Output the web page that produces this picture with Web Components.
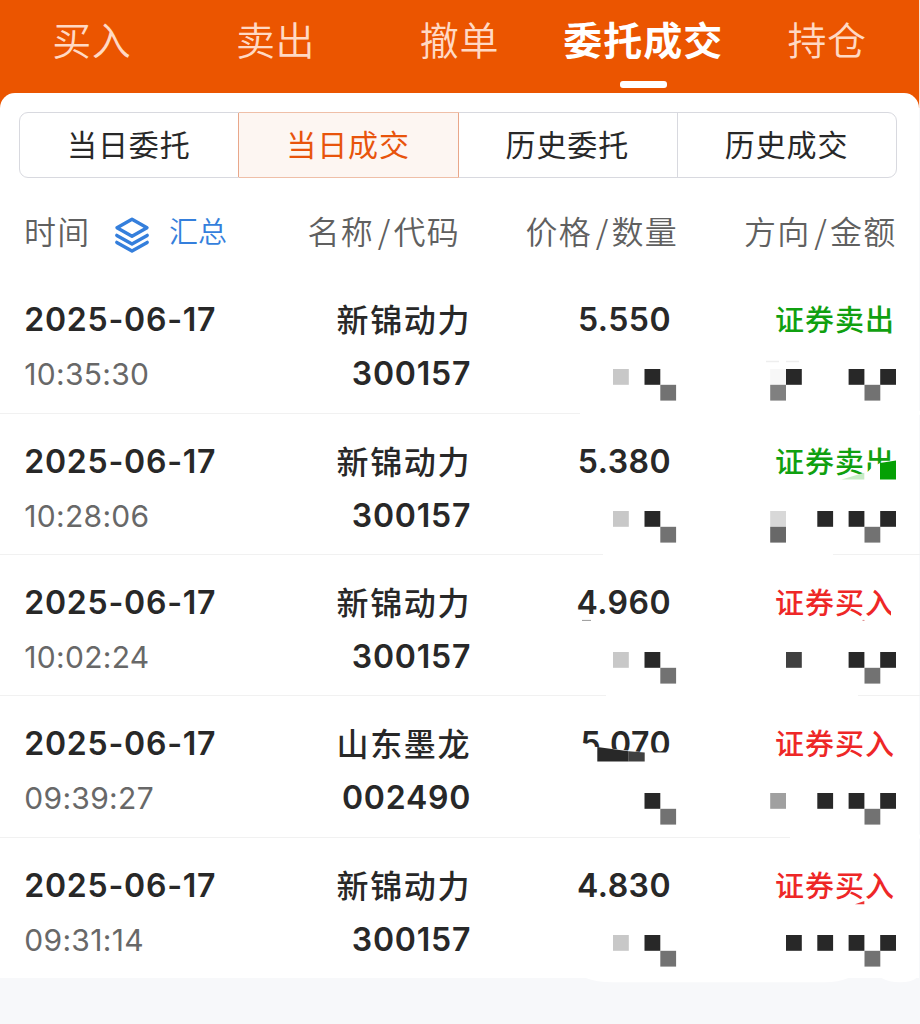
<!DOCTYPE html>
<html lang="zh-CN">
<head>
<meta charset="utf-8">
<title>当日成交</title>
<style>
html,body{margin:0;padding:0}
body{width:920px;height:1024px;overflow:hidden;background:#f7f8fa;font-family:Inter,"Noto Sans CJK SC",sans-serif;color:#282828}
</style>
</head>
<body>
<trade-page></trade-page>
<script>
const define = (name, html, setup) => customElements.define(name, class extends HTMLElement {
  constructor() {
    super();
    this.attachShadow({ mode: 'open' }).innerHTML = html;
  }
  connectedCallback() { if (setup) setup.call(this, this.shadowRoot); }
});

define('nav-tab', `
<style>
:host{display:flex;flex-direction:column;align-items:center;flex:1 1 0;height:93px;box-sizing:border-box;padding-top:10px;font-family:"Noto Sans CJK SC",sans-serif;font-size:39px;line-height:56px;color:#ffd9c4;font-weight:350;white-space:nowrap}
:host([active]){color:#fff;font-weight:700}
.t{letter-spacing:var(--ls,.6px);margin-right:.2px}
i{display:none;width:47px;height:7px;border-radius:3px;background:#fff;margin-top:15px}
:host([active]) i{display:block}
</style><span class="t"><slot></slot></span><i></i>`);

define('segment-item', `
<style>
:host{display:flex;align-items:center;justify-content:center;flex:1 1 0;box-sizing:border-box;border-right:1px solid #d8d9df;font:400 30px/44px "Noto Sans CJK SC",sans-serif;letter-spacing:.9px;color:#282828;padding:0 .5px 4px 0}
:host(:last-child){border-right:0}
:host([active]){color:#e8540c;background:#fdf6f2;box-shadow:-1px 0 #e9a78a,0 -1px #efbfa8,0 1px #efbfa8;border-color:#e9a78a}
</style><slot></slot>`);

define('segment-bar', `
<style>
:host{display:flex;box-sizing:border-box;height:66px;margin:0 22px 0 19px;border:1px solid #d8d9df;border-radius:9px}
</style><slot></slot>`);

define('layers-icon', `
<style>:host{display:block;width:36px;height:36px}svg{display:block}</style>
<svg width="36" height="36" viewBox="0 0 36 36" fill="none" stroke="#357fdc" stroke-width="3.4" stroke-linecap="round" stroke-linejoin="round">
<path d="M18 2.2 33 10.7 18 19.3 3 10.7Z"/><path d="M2.8 18.4 18 27 33.2 18.4"/><path d="M2.8 25.4 18 34 33.2 25.4"/></svg>`);

define('column-heads', `
<style>
:host{display:grid;grid-template-columns:236px 200px 218px 1fr;height:94px;box-sizing:border-box;padding:27px 22.5px 0 24px;font:350 32px/50px "Noto Sans CJK SC",sans-serif;color:#606060}
div{text-align:right;letter-spacing:1.2px;white-space:nowrap}
.time{display:flex;text-align:left}
layers-icon{margin:12px 0 0 23.6px}
.sum{color:#357fdc;font-size:29px;letter-spacing:0;margin-left:19px}
b{font-weight:inherit;margin:0 2px 0 4px}
</style>
<div class="time"><span>时间</span><layers-icon></layers-icon><span class="sum">汇总</span></div>
<div>名称<b>/</b>代码</div><div>价格<b>/</b>数量</div><div>方向<b>/</b>金额</div>`);

define('trade-row', `
<style>
:host{display:grid;grid-template-columns:246.7px 200.3px 199.8px 1fr;grid-template-rows:54px 54px;position:relative;box-sizing:border-box;height:141.4px;padding:21px 25px 0 24.3px;font-weight:600;font-size:32px;line-height:54px;border-bottom:1px solid #f1f1f1;white-space:nowrap}
:host(:last-child){border-bottom-color:transparent}
.date{letter-spacing:.75px}
.name{text-align:right;font:500 32px/50px "Noto Sans CJK SC",sans-serif;letter-spacing:1.7px}
.price{text-align:right;letter-spacing:.5px}
.side{text-align:right;font:500 29px/50px "Noto Sans CJK SC",sans-serif;letter-spacing:1px;color:#10a010}
:host([side=buy]) .side{color:#ee2727}
.time{font-weight:400;font-size:30px;color:#686868;letter-spacing:.3px}
.code{text-align:right;letter-spacing:.8px}
svg{position:absolute;left:0;top:0;width:920px;height:146px;overflow:visible;z-index:1}
</style>
<div class="date"><slot name="date"></slot></div><div class="name"><slot name="name"></slot></div><div class="price"><slot name="price"></slot></div><div class="side"><slot name="side"></slot></div>
<div class="time"><slot name="time"></slot></div><div class="code"><slot name="code"></slot></div>
<svg></svg>`, function (root) {
  // Redaction cells: "column,row,colour"; shapes are drawn in page coordinates.
  const index = Number(this.getAttribute('index'));
  const xs = [613, 644.5, 660.3, 770.2, 786, 817.3, 848.6, 864.5, 880.2];
  const cells = rows[index][5].split(' ').map(c => {
    const [x, y, f] = c.split(',');
    return `<rect x="${xs[x]}" y="${97 + y * 15.8}" width="15.8" height="15.8" fill="#${f}"/>`;
  }).join('');
  const top = 272.2 + 141.4 * index;
  root.querySelector('svg').innerHTML = cells + `<g transform="translate(0 ${-top})">${rows[index][6]}</g>`;
});

const rows = [
  ['sell', '新锦动力', '300157', '10:35:30', '5.550', '0,0,c8c8c8 1,0,282828 2,1,727272 3,0,f7f7f7 4,0,282828 3,1,808080 6,0,282828 7,1,727272 8,0,282828',
   '<rect x="580" y="411" width="340" height="4" fill="#fff"/><path d="M766 361.6h13M786 361.6h13" stroke="#eee" stroke-width="1.5"/>'],
  ['sell', '新锦动力', '300157', '10:28:06', '5.380', '0,0,c8c8c8 1,0,282828 2,1,727272 3,0,d8d8d8 3,1,686868 5,0,282828 6,0,282828 7,1,727272 8,0,282828',
   '<rect x="603" y="552" width="230" height="4" fill="#fff"/><path d="M864 473 868 471 872 467 880 462.7 897 459V479H864Z" fill="#fff"/><path d="M841.5 479 864.3 472.3V479Z" fill="#c8ebc6"/><path d="M880 462.7 896 460V479H880Z" fill="#05a005"/>'],
  ['buy', '新锦动力', '300157', '10:02:24', '4.960', '0,0,c8c8c8 1,0,282828 2,1,727272 4,0,404040 6,0,282828 7,1,727272 8,0,282828',
   '<rect x="606" y="693" width="252" height="5" fill="#fff"/><path d="M582 620.4h9" stroke="#999"/><path d="M862.5 620.4h2" stroke="#d88"/><path d="M891 600h5v17h-5Z" fill="#fff"/>'],
  ['buy', '山东墨龙', '002490', '09:39:27', '5.070', '1,0,282828 2,1,727272 3,0,a0a0a0 5,0,282828 6,0,282828 7,1,727272 8,0,282828',
   '<rect x="790" y="835" width="130" height="4" fill="#fff"/><path d="M578 746 597 747.3 645 753H675V765H578Z" fill="#fff"/><path d="M597.3 747.3 628.7 751.7V762H597.3Z" fill="#282828"/><path d="M628.7 751.7 644.7 753V762H628.7Z" fill="#404040"/>'],
  ['buy', '新锦动力', '300157', '09:31:14', '4.830', '0,0,c8c8c8 1,0,282828 2,1,727272 4,0,282828 5,0,282828 6,0,282828 7,1,727272 8,0,282828',
   '<path d="M855 904 864.3 900.7V904Z" fill="#e33"/><path d="M585 977.5Q597 982 612 982H825Q838 982 849 977.5Z" fill="#fff"/><path d="M881 977.5Q889 982 900 982T917 977.5Z" fill="#fff"/>']
];

define('trade-page', `
<style>
:host{display:block;width:920px;height:1024px;background:#f7f8fa}
nav{display:flex;height:108px;background:#eb5500;background-clip:padding-box;border-right:1px solid #fbe3d6;box-sizing:border-box}
main{margin-top:-15px;background:#fff;border-radius:15px 15px 0 0;padding-top:19px;position:relative;height:885px;box-sizing:border-box;margin-right:1px}
.list{margin-top:.2px;margin-right:-1px}
</style>
<nav><nav-tab>买入</nav-tab><nav-tab>卖出</nav-tab><nav-tab>撤单</nav-tab><nav-tab active style="--ls:1px">委托成交</nav-tab><nav-tab>持仓</nav-tab></nav>
<main>
<segment-bar><segment-item>当日委托</segment-item><segment-item active>当日成交</segment-item><segment-item>历史委托</segment-item><segment-item>历史成交</segment-item></segment-bar>
<column-heads></column-heads>
<div class="list">${rows.map((r, i) => `<trade-row index="${i}" side="${r[0]}"><span slot="date">2025-06-17</span><span slot="name">${r[1]}</span><span slot="price">${r[4]}</span><span slot="side">${r[0] === 'sell' ? '证券卖出' : '证券买入'}</span><span slot="time">${r[3]}</span><span slot="code">${r[2]}</span></trade-row>`).join('')}</div>
</main>`);
</script>
</body>
</html>
